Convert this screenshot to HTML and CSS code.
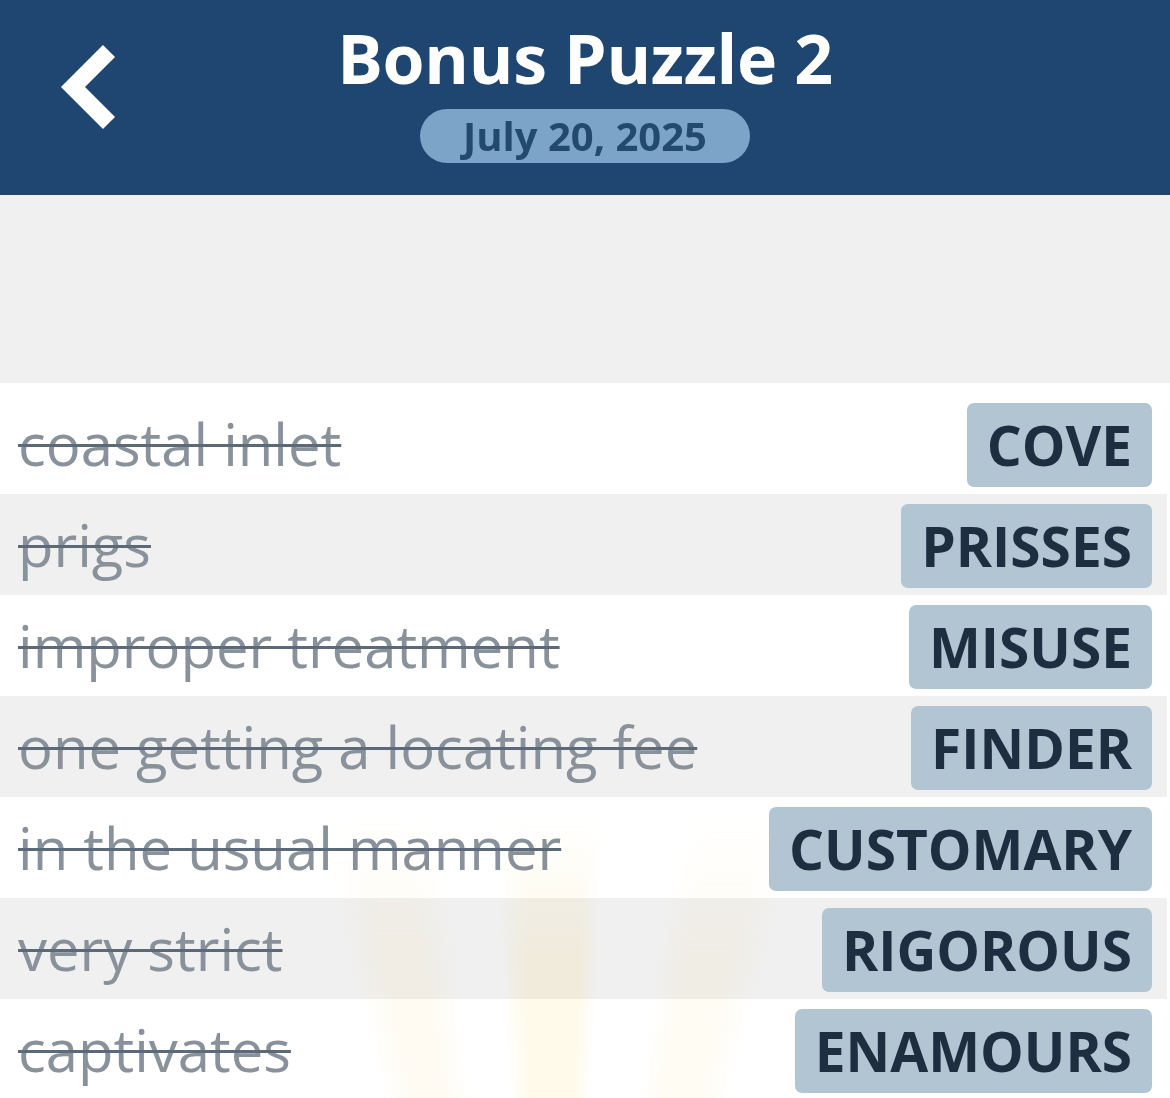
FILE: index.html
```html
<!DOCTYPE html>
<html>
	<head>
		<meta charset="utf-8">
		<title>Bonus Puzzle 2</title>
		<link rel="stylesheet" href="styles.css">
	</head>
	<body>
		<!-- 顶部标题栏 -->
		<header class="topbar">
			<a class="btn-back" href="#">
				<svg width="64" height="92" viewBox="0 0 64 92">
					<polyline points="53,7 17,43 53,79" fill="none" stroke="#fff" stroke-width="17"/>
				</svg>
			</a>
			<h1 class="title">Bonus Puzzle 2</h1>
			<div class="date">July 20, 2025</div>
		</header>

		<!-- 空白区域 -->
		<div class="spacer"></div>

		<!-- 线索列表 -->
		<div class="page">
			<ul class="clue-list">
				<li class="clue"><span class="clue-text">coastal inlet</span><span class="answer">COVE</span></li>
				<li class="clue"><span class="clue-text">prigs</span><span class="answer">PRISSES</span></li>
				<li class="clue"><span class="clue-text">improper treatment</span><span class="answer">MISUSE</span></li>
				<li class="clue"><span class="clue-text">one getting a locating fee</span><span class="answer">FINDER</span></li>
				<li class="clue"><span class="clue-text">in the usual manner</span><span class="answer">CUSTOMARY</span></li>
				<li class="clue"><span class="clue-text">very strict</span><span class="answer">RIGOROUS</span></li>
				<li class="clue"><span class="clue-text">captivates</span><span class="answer">ENAMOURS</span></li>
			</ul>
			<div class="rays"></div>
		</div>
	</body>
</html>
```

FILE: styles.css
```css
*{
	margin: 0;
	padding: 0;
}
body{
	background: #fff;
	font-family: "Open Sans", "Noto Sans", sans-serif;
	overflow: hidden;
}
.topbar{
	height: 195px;
	box-sizing: border-box;
	padding-top: 22px;
	background: #1f4670;
	display: grid;
	grid-template-columns: 1fr auto 1fr;
	grid-template-rows: auto auto;
	align-content: start;
	justify-items: center;
}
.btn-back{
	grid-column: 1;
	grid-row: 1 / 3;
	justify-self: start;
	align-self: start;
	margin: 22px 0 0 56px;
	display: block;
	line-height: 0;
}
.title{
	grid-column: 2;
	grid-row: 1;
	color: #fff;
	font-size: 68px;
	font-weight: 700;
	line-height: 72px;
	letter-spacing: -0.3px;
}
.date{
	grid-column: 2;
	grid-row: 2;
	margin-top: 15px;
	width: 330px;
	height: 54px;
	line-height: 54px;
	border-radius: 27px;
	background: #7ca4c8;
	color: #24496f;
	font-size: 40px;
	font-weight: 700;
	text-align: center;
}
.spacer{
	height: 188px;
	background: #f0f0f0;
}
.page{
	position: relative;
}
.clue-list{
	list-style: none;
	padding-top: 10px;
	margin-right: 3px;
}
.clue{
	display: flex;
	align-items: baseline;
	justify-content: space-between;
	padding: 10px 15px 7px 18px;
}
.clue:nth-child(even){
	background: #f0f0f0;
}
.clue-text{
	color: #89919b;
	font-size: 58px;
	text-decoration: line-through;
	text-decoration-color: #5b6978;
	text-decoration-thickness: 3px;
	white-space: nowrap;
}
.answer{
	height: 84px;
	line-height: 84px;
	padding: 0 20px;
	border-radius: 7px;
	background: #b2c5d3;
	color: #1c2e40;
	font-size: 55px;
	font-weight: 700;
}
/* 底部淡黄色光线 */
.rays{
	position: absolute;
	left: 0;
	right: 0;
	bottom: 0;
	height: 290px;
	pointer-events: none;
	mix-blend-mode: multiply;
	background: conic-gradient(from -20deg at 550px 960px,
		transparent 0deg, transparent 6deg,
		rgba(255,220,130,.1) 8.5deg, rgba(255,220,130,.1) 11deg,
		transparent 13.5deg, transparent 16.5deg,
		rgba(255,220,120,.16) 18.5deg, rgba(255,220,120,.16) 22deg,
		transparent 23.5deg, transparent 27.5deg,
		rgba(255,220,130,.09) 29.5deg, rgba(255,220,130,.09) 32.5deg,
		transparent 35deg, transparent 360deg);
	-webkit-mask-image: linear-gradient(to bottom, transparent, #000 50%);
	mask-image: linear-gradient(to bottom, transparent, #000 50%);
}
```
